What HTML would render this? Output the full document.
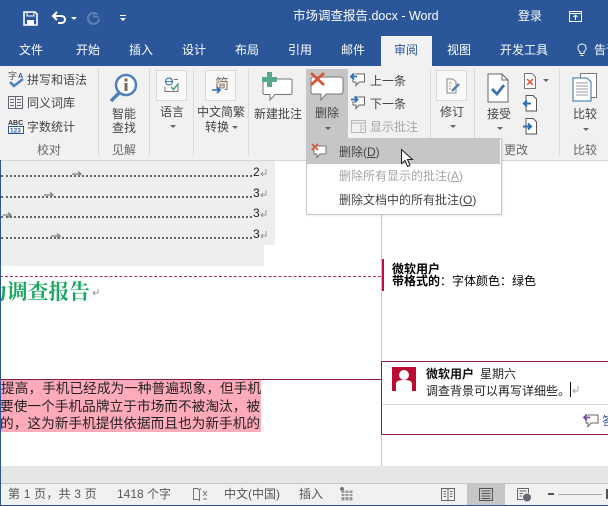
<!DOCTYPE html>
<html lang="zh"><head><meta charset="utf-8"><style>
html,body{margin:0;padding:0}
body{width:608px;height:506px;overflow:hidden;position:relative;background:#fff;font-family:"Liberation Sans","Noto Sans CJK SC",sans-serif;font-size:12px;color:#444}
.a{position:absolute}
.t{position:absolute;white-space:nowrap;line-height:14px}
.w{color:#fff}
.sep{position:absolute;top:69px;height:87px;width:1px;background:#dadada}
.box{position:absolute;width:29px;height:29px;background:#f8f8f8;border:1px solid #d8d8d8}
.arr{position:absolute;width:0;height:0;border-left:3px solid transparent;border-right:3px solid transparent;border-top:3px solid #666}
.tab{position:absolute;top:42px;line-height:16px;color:#fff;white-space:nowrap}
svg{position:absolute;overflow:visible}
u{text-decoration:underline}
</style></head><body>
<div class="a" style="left:0;top:0;width:608px;height:66px;background:#2b579a"></div>
<div class="a" style="left:0;top:66px;width:608px;height:94px;background:#f1f1f1;border-bottom:1px solid #d6d6d6"></div>
<div class="a" style="left:381px;top:36px;width:51px;height:30px;background:#f1f1f1"></div>

<!-- QAT -->
<svg style="left:23px;top:11px" width="15" height="15"><path d="M1 1H12L14 3V14H1Z" fill="none" stroke="#fff" stroke-width="1.6"/><rect x="4" y="1" width="7" height="4" fill="none" stroke="#fff"/><rect x="4" y="9" width="7" height="5" fill="#fff"/></svg>
<svg style="left:52px;top:11px" width="15" height="14"><path d="M1 5H9C12 5 13 7 13 8.5S12 12 9 12H6" fill="none" stroke="#fff" stroke-width="2"/><path d="M5 1L1 5L5 9" fill="none" stroke="#fff" stroke-width="2"/></svg>
<div class="arr" style="left:71px;top:17px;border-top-color:#fff"></div>
<svg style="left:86px;top:11px" width="15" height="15"><path d="M11.5 3.5A5.5 5.5 0 1 0 13 8" fill="none" stroke="#5f80b5" stroke-width="2"/><path d="M8 1V6H13" fill="none" stroke="#5f80b5" stroke-width="1.5"/></svg>
<div class="a" style="left:120px;top:15px;width:6px;height:1px;background:#fff"></div>
<div class="arr" style="left:120px;top:18px;border-top-color:#fff"></div>

<div class="t w" style="left:293px;top:8px;font-size:12.5px;line-height:16px">市场调查报告.docx - Word</div>
<div class="t w" style="left:518px;top:8px;line-height:16px">登录</div>
<svg style="left:569px;top:11px" width="14" height="11"><rect x=".5" y=".5" width="12" height="10" fill="none" stroke="#fff"/><path d="M.5 2.5H12.5M6.5 9V4.5M4.5 6L6.5 4L8.5 6" fill="none" stroke="#fff"/></svg>

<!-- tabs -->
<div class="tab" style="left:19px">文件</div>
<div class="tab" style="left:76px">开始</div>
<div class="tab" style="left:129px">插入</div>
<div class="tab" style="left:182px">设计</div>
<div class="tab" style="left:235px">布局</div>
<div class="tab" style="left:288px">引用</div>
<div class="tab" style="left:341px">邮件</div>
<div class="tab" style="left:394px;color:#2b579a">审阅</div>
<div class="tab" style="left:447px">视图</div>
<div class="tab" style="left:500px">开发工具</div>
<svg style="left:577px;top:43px" width="10" height="15"><path d="M5 1A4 4 0 0 0 3 8.5V10.5H7V8.5A4 4 0 0 0 5 1ZM3.5 12.5H6.5" fill="none" stroke="#fff"/></svg>
<div class="tab" style="left:594px">告诉</div>

<!-- separators -->
<div class="sep" style="left:98px"></div><div class="sep" style="left:149px"></div><div class="sep" style="left:193px"></div><div class="sep" style="left:248px"></div><div class="sep" style="left:430px"></div><div class="sep" style="left:474px"></div><div class="sep" style="left:559px"></div>

<!-- proofing -->
<svg style="left:8px;top:70px" width="18" height="18"><text x="0" y="9" font-size="9" fill="#555" font-family="Noto Sans CJK SC">字</text><text x="10" y="8" font-size="7" fill="#2b579a" font-weight="bold">A</text><path d="M2 12L6 16L15 9" fill="none" stroke="#4d82b8" stroke-width="2.5"/></svg>
<div class="t" style="left:27px;top:73px">拼写和语法</div>
<svg style="left:8px;top:96px" width="16" height="13"><path d="M.5.5H7.5V12.5H.5ZM7.5.5H14.5V12.5H7.5ZM2 3.5H6M2 6.5H6M2 9.5H6M9 3.5H13M9 6.5H13M9 9.5H13" fill="none" stroke="#667"/></svg>
<div class="t" style="left:27px;top:96px">同义词库</div>
<svg style="left:8px;top:118px" width="17" height="16"><text x="0" y="7" font-size="7" fill="#333" font-weight="bold">ABC</text><rect x=".5" y="8.5" width="15" height="7" fill="#fff" stroke="#2b579a"/><text x="2" y="14.5" font-size="6.5" fill="#2b579a" font-weight="bold">123</text></svg>
<div class="t" style="left:27px;top:120px">字数统计</div>
<div class="t" style="left:37px;top:143px;color:#666">校对</div>

<!-- insights -->
<svg style="left:109px;top:72px" width="30" height="32"><circle cx="17" cy="13" r="10" fill="#fff" stroke="#4d82b8" stroke-width="2.5"/><path d="M10 21L2 29" stroke="#4d82b8" stroke-width="3.5"/><rect x="15.5" y="11" width="3" height="8" fill="#7a6a5a"/><rect x="15.5" y="6.5" width="3" height="3" fill="#7a6a5a"/></svg>
<div class="t" style="left:112px;top:107px">智能</div>
<div class="t" style="left:112px;top:121px">查找</div>
<div class="t" style="left:112px;top:143px;color:#666">见解</div>

<!-- language -->
<div class="box" style="left:156px;top:70px"></div>
<svg style="left:164px;top:77px" width="16" height="16"><circle cx="5" cy="4.5" r="3.5" fill="none" stroke="#4d82b8" stroke-width="1.3"/><path d="M1 4.5H9" stroke="#4d82b8"/><path d="M1 10V14.5H14V6M10 2.5H14" fill="none" stroke="#777"/><path d="M7 10L9.5 12.5L14 7" fill="none" stroke="#5aa67a" stroke-width="1.6"/></svg>
<div class="t" style="left:160px;top:105px">语言</div>
<div class="arr" style="left:170px;top:125px"></div>

<div class="box" style="left:205px;top:70px"></div>
<div class="t" style="left:215px;top:76px;font-size:14px;line-height:16px;color:#7a6a5a">简</div>
<svg style="left:212px;top:86px" width="10" height="8"><path d="M0 4H8M5 1L8 4L5 7" fill="none" stroke="#2b6fb0" stroke-width="1.6"/></svg>
<div class="t" style="left:197px;top:105px">中文简繁</div>
<div class="t" style="left:205px;top:120px">转换</div>
<div class="arr" style="left:232px;top:126px"></div>

<!-- new comment -->
<svg style="left:262px;top:72px" width="32" height="30"><path d="M4.5 7H30.5C31.5 7 32 8 32 9V21C32 22 31.5 22.5 30.5 22.5H15L10 28V22.5H4.5C3.5 22.5 3 22 3 21V9C3 8 3.5 7 4.5 7Z" transform="translate(-2 0)" fill="#fff" stroke="#777"/><path d="M5 0H10V5H15V10H10V15H5V10H0V5H5Z" fill="#5aa690"/></svg>
<div class="t" style="left:254px;top:107px">新建批注</div>

<!-- delete -->
<div class="a" style="left:306px;top:69px;width:42px;height:70px;background:#c6c6c6"></div>
<svg style="left:310px;top:72px" width="34" height="30"><path d="M3 5H31C32 5 33 6 33 7V20C33 21 32 22 31 22H16L11 28V22H3C2 22 1 21 1 20V7C1 6 2 5 3 5Z" fill="#fff" stroke="#777"/><path d="M1 1L14 13M14 1L1 13" stroke="#d9553a" stroke-width="2.8"/></svg>
<div class="t" style="left:315px;top:106px">删除</div>
<div class="arr" style="left:325px;top:127px"></div>

<svg style="left:351px;top:72px" width="15" height="16"><path d="M4 2H13.5V10H8L5 13.5V10H2V6" fill="#fff" stroke="#666"/><path d="M0 4.5H6M3 1.5L0 4.5L3 7.5" fill="none" stroke="#2b6fb0" stroke-width="1.8"/></svg>
<div class="t" style="left:370px;top:74px">上一条</div>
<svg style="left:351px;top:95px" width="15" height="16"><path d="M4 2H13.5V10H8L5 13.5V10H2V6" fill="#fff" stroke="#666"/><path d="M0 4.5H6.5M3.5 1.5L6.5 4.5L3.5 7.5" fill="none" stroke="#2b6fb0" stroke-width="1.8"/></svg>
<div class="t" style="left:370px;top:97px">下一条</div>
<svg style="left:351px;top:120px" width="16" height="14"><rect x=".5" y=".5" width="14" height="12" fill="none" stroke="#b8b8b8"/><path d="M.5 3H14.5M10 3V12.5M11.5 6H13.5M11.5 9H13.5" fill="none" stroke="#b8b8b8"/></svg>
<div class="t" style="left:370px;top:120px;color:#a6a6a6">显示批注</div>

<!-- track -->
<div class="box" style="left:436px;top:70px"></div>
<svg style="left:446px;top:78px" width="15" height="16"><path d="M1 1H7L10 4V15H1Z" fill="#fff" stroke="#888"/><path d="M3 5H6M3 8H5M3 11H5" stroke="#d08a3c"/><path d="M6 13L13 6" stroke="#4d82b8" stroke-width="2.5"/></svg>
<div class="t" style="left:440px;top:105px">修订</div>
<div class="arr" style="left:450px;top:125px"></div>

<!-- changes -->
<svg style="left:487px;top:73px" width="23" height="30"><path d="M1 1H15L21 7V29H1Z" fill="#fff" stroke="#666"/><path d="M15 1V7H21" fill="none" stroke="#666"/><path d="M5 16L10 21L17 12" fill="none" stroke="#3f74b0" stroke-width="2.8"/></svg>
<div class="t" style="left:487px;top:107px">接受</div>
<div class="arr" style="left:497px;top:127px"></div>
<svg style="left:524px;top:73px" width="13" height="16"><path d="M.5.5H8L11.5 4V15.5H.5Z" fill="#fff" stroke="#777"/><path d="M3 6L9 12M9 6L3 12" stroke="#d9553a" stroke-width="1.5"/></svg>
<div class="arr" style="left:543px;top:79px"></div>
<svg style="left:523px;top:95px" width="15" height="17"><path d="M3 .5H10L13.5 4V16H3Z" fill="#fff" stroke="#555"/><path d="M1 8.5H8M4 5.5L1 8.5L4 11.5" fill="none" stroke="#2b6fb0" stroke-width="2"/></svg>
<svg style="left:523px;top:118px" width="15" height="17"><path d="M3 .5H10L13.5 4V16H3Z" fill="#fff" stroke="#555"/><path d="M0 8.5H8M5 5.5L8 8.5L5 11.5" fill="none" stroke="#2b6fb0" stroke-width="2"/></svg>
<div class="t" style="left:504px;top:143px;color:#666">更改</div>

<!-- compare -->
<svg style="left:572px;top:73px" width="26" height="30"><rect x="8.5" y=".5" width="16" height="24" fill="#fff" stroke="#777"/><path d="M1 5H15L19 9V28H1Z" fill="#fff" stroke="#2b6fb0"/><path d="M4 10H16M4 13H16M4 16H16M4 19H16M4 22H16" stroke="#99a"/></svg>
<div class="t" style="left:573px;top:107px">比较</div>
<div class="arr" style="left:583px;top:128px"></div>
<div class="t" style="left:573px;top:143px;color:#666">比较</div>

<!-- document -->
<div class="a" style="left:0;top:161px;width:275px;height:84px;background:#eee"></div>
<div class="a" style="left:0;top:245px;width:264px;height:21px;background:#eee"></div>
<div class="a" style="left:1px;top:175px;width:251px;border-top:2px dotted #666"></div>
<div class="a" style="left:1px;top:196px;width:251px;border-top:2px dotted #666"></div>
<div class="a" style="left:1px;top:216px;width:251px;border-top:2px dotted #666"></div>
<div class="a" style="left:1px;top:237px;width:251px;border-top:2px dotted #666"></div>
<div class="t" style="left:253px;top:165px;color:#222">2</div>
<div class="t" style="left:253px;top:186px;color:#222">3</div>
<div class="t" style="left:253px;top:206px;color:#222">3</div>
<div class="t" style="left:253px;top:227px;color:#222">3</div>
<svg style="left:0;top:160px" width="280" height="90">
<path d="M72 14H81M78 11.5L81 14L78 16.5M44 35H53M50 32.5L53 35L50 37.5M3 55H11M8 52.5L11 55L8 57.5M51 76H60M57 73.5L60 76L57 78.5" fill="none" stroke="#808080" stroke-width="1.3"/>
<path d="M266 9V14H261M263 12L261 14L263 16M266 30V35H261M263 33L261 35L263 37M266 50V55H261M263 53L261 55L263 57M266 71V76H261M263 74L261 76L263 78" fill="none" stroke="#999"/></svg>
<div class="a" style="left:0;top:276px;width:381px;border-top:1px dashed #a8305f"></div>
<div class="a" style="left:381px;top:214px;width:1px;height:252px;background:#c4c4c4"></div>
<div class="a" style="left:382px;top:259px;width:2px;height:32px;background:#b5123f"></div>
<div class="a" style="left:0;top:277px;width:92px;height:26px;overflow:hidden"><div class="t" style="left:-14px;top:0;font:bold 20.8px/26px 'Noto Serif CJK SC',serif;color:#19a862">为调查报告</div></div>
<svg style="left:92px;top:288px" width="8" height="8"><path d="M6 1V5H1M3 3L1 5L3 7" fill="none" stroke="#999"/></svg>
<div class="t" style="left:392px;top:262px;color:#000;font-weight:bold">微软用户</div>
<div class="t" style="left:392px;top:274px;color:#000"><b>带格式的</b>：字体颜色：绿色</div>

<!-- highlighted -->
<div class="a" style="left:0;top:379px;width:381px;height:1px;background:#8f1d4b"></div>
<div class="a" style="left:0;top:380px;width:261px;height:52px;background:#ffabba"></div>
<div class="a" style="left:0;top:380px;width:261px;height:52px;overflow:hidden;color:#222;font-size:13.7px">
<div class="t" style="left:1px;top:1px;line-height:16px">提高，手机已经成为一种普遍现象，但手机</div>
<div class="t" style="left:0;top:19px;line-height:16px">要使一个手机品牌立于市场而不被淘汰，被</div>
<div class="t" style="left:0;top:36px;line-height:16px">的，这为新手机提供依据而且也为新手机的</div>
</div>

<!-- comment card -->
<div class="a" style="left:381px;top:361px;width:228px;height:72px;border:1px solid #8f1d4b;box-sizing:content-box;background:#fff"></div>
<div class="a" style="left:382px;top:404px;width:226px;height:1px;background:#ddd"></div>
<svg style="left:392px;top:367px" width="24" height="24"><rect width="24" height="24" fill="#bb0b33"/><circle cx="12" cy="8" r="5" fill="#fff"/><path d="M4 24V17C4 14 7 13 12 13S20 14 20 17V24Z" fill="#fff"/></svg>
<div class="t" style="left:426px;top:367px;color:#111"><b>微软用户</b></div>
<div class="t" style="left:480px;top:367px;color:#222">星期六</div>
<div class="t" style="left:426px;top:384px;color:#222">调查背景可以再写详细些。</div>
<div class="a" style="left:570px;top:382px;width:1px;height:15px;background:#111"></div>
<svg style="left:572px;top:385px" width="8" height="10"><path d="M6 1V6H1M3 4L1 6L3 8" fill="none" stroke="#aaa"/></svg>
<svg style="left:584px;top:413px" width="15" height="15"><path d="M4 2H14V10H7L4 13.5V10H2V6" fill="#fff" stroke="#666"/><path d="M0 4.5H6M3 1.5L0 4.5L3 7.5" fill="none" stroke="#7a4d9c" stroke-width="1.8"/></svg>
<div class="t" style="left:602px;top:414px;color:#2b579a">答</div>

<!-- dropdown -->
<div class="a" style="left:306px;top:138px;width:194px;height:75px;background:#fff;border:1px solid #c6c6c6;box-shadow:1px 1px 2px rgba(0,0,0,.08)"></div>
<div class="a" style="left:307px;top:139px;width:193px;height:25px;background:#c6c6c6"></div>
<svg style="left:311px;top:143px" width="17" height="16"><path d="M3 3H15V11H9L6 14.5V11H3Z" fill="#fff" stroke="#777"/><path d="M1 1L7 7M7 1L1 7" stroke="#d9553a" stroke-width="1.7"/></svg>
<div class="t" style="left:339px;top:145px">删除(<u>D</u>)</div>
<div class="t" style="left:339px;top:169px;color:#a6a6a6">删除所有显示的批注(<u>A</u>)</div>
<div class="t" style="left:339px;top:193px">删除文档中的所有批注(<u>O</u>)</div>
<svg style="left:401px;top:149px" width="14" height="20"><path d="M.5.5V14.5L4 11.5L6.5 17.5L9 16.5L6.5 10.5H11.5Z" fill="#fff" stroke="#222"/></svg>

<!-- bottom -->
<div class="a" style="left:0;top:466px;width:608px;height:17px;background:#e6e6e6"></div>
<div class="a" style="left:0;top:483px;width:608px;height:1px;background:#c6c6c6"></div>
<div class="a" style="left:0;top:484px;width:608px;height:21px;background:#f1f1f1"></div>
<div class="a" style="left:0;top:505px;width:608px;height:1px;background:#2b579a"></div>
<div class="a" style="left:0;top:160px;width:1px;height:346px;background:#2b579a"></div>
<div class="t" style="left:8px;top:487px;color:#555;letter-spacing:.2px">第 1 页，共 3 页</div>
<div class="t" style="left:117px;top:487px;color:#555">1418 个字</div>
<svg style="left:193px;top:488px" width="15" height="13"><path d="M.5.5H5L6.5 2V12.5L5 11.5H.5ZM6.5 2L8 .5" fill="none" stroke="#777"/><path d="M10 3L14 8M14 3L10 8M10 11H14" stroke="#777"/></svg>
<div class="t" style="left:224px;top:487px;color:#555">中文(中国)</div>
<div class="t" style="left:299px;top:487px;color:#555">插入</div>
<svg style="left:340px;top:487px" width="13" height="14"><rect x="0" y="0" width="4" height="4" rx="2" fill="#777"/><rect x="1.5" y="3.5" width="11" height="10" fill="#999"/><path d="M1.5 6.5H12.5M1.5 9.5H12.5M5 3.5V13.5M9 3.5V13.5" stroke="#eee"/></svg>
<svg style="left:441px;top:488px" width="14" height="13"><path d="M.5.5H6.5L7 1.5L7.5.5H13.5V12.5H.5ZM7 1.5V12.5M2.5 3.5H5M2.5 6H5M2.5 8.5H5M9 3.5H11.5M9 6H11.5M9 8.5H11.5" fill="none" stroke="#666"/></svg>
<div class="a" style="left:467px;top:484px;width:38px;height:21px;background:#c6c6c6"></div>
<svg style="left:479px;top:488px" width="14" height="13"><path d="M.5.5H13.5V12.5H.5ZM2.5 3H11.5M2.5 5.5H11.5M2.5 8H11.5M2.5 10.5H11.5" fill="none" stroke="#555"/></svg>
<svg style="left:517px;top:488px" width="15" height="14"><path d="M.5.5H11.5V5M6 11.5H.5V.5M2.5 3H9.5M2.5 5.5H6M2.5 8H5" fill="none" stroke="#666"/><circle cx="10" cy="9.5" r="4" fill="#667"/></svg>
<div class="a" style="left:548px;top:493px;width:6px;height:2px;background:#555"></div>
<div class="a" style="left:558px;top:494px;width:44px;height:1px;background:#aaa"></div>
<div class="a" style="left:606px;top:489px;width:2px;height:10px;background:#555"></div>
</body></html>
